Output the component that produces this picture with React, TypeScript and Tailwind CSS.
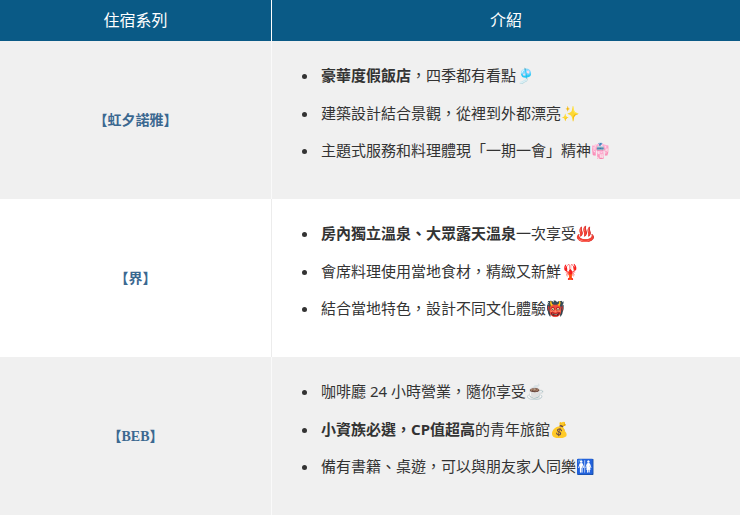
import React from "react";

type Row = { name: string; bg: string; line: string; items: React.ReactNode[] };

const rows: Row[] = [
  {
    name: "【虹夕諾雅】",
    bg: "bg-[#f0f0f0]",
    line: "border-[#fafafa]",
    items: [
      <><b className="font-bold">豪華度假飯店</b>，四季都有看點🎐</>,
      <>建築設計結合景觀，從裡到外都漂亮✨</>,
      <>主題式服務和料理體現「一期一會」精神👘</>,
    ],
  },
  {
    name: "【界】",
    bg: "bg-white",
    line: "border-[#ececec]",
    items: [
      <><b className="font-bold">房內獨立溫泉、大眾露天溫泉</b>一次享受♨️</>,
      <>會席料理使用當地食材，精緻又新鮮🦞</>,
      <>結合當地特色，設計不同文化體驗👹</>,
    ],
  },
  {
    name: "【BEB】",
    bg: "bg-[#f0f0f0]",
    line: "border-[#fafafa]",
    items: [
      <>咖啡廳 24 小時營業，隨你享受☕</>,
      <><b className="font-bold">小資族必選，CP值超高</b>的青年旅館💰</>,
      <>備有書籍、桌遊，可以與朋友家人同樂🚻</>,
    ],
  },
];

const serif = "font-[Liberation_Serif,Noto_Sans_CJK_TC,serif]";
const sans = "font-['Noto_Sans','Noto_Sans_CJK_TC','Noto_Color_Emoji',sans-serif]";

export default function App() {
  return (
    <div className="w-[740px] h-[515px] overflow-hidden bg-white">
      <div className="flex h-[41px] bg-[#0a5a86] text-white">
        <div className={`w-[272px] flex items-center justify-center text-[16px] border-r border-white ${serif}`}>
          住宿系列
        </div>
        <div className={`flex-1 flex items-center justify-center text-[16px] ${serif}`}>
          介紹
        </div>
      </div>
      {rows.map((r, i) => (
        <div key={i} className={`flex h-[158px] ${r.bg}`}>
          <div
            className={`w-[272px] flex items-center justify-center border-r ${r.line} text-[14px] font-bold text-[#3b6890] ${serif}`}
          >
            {r.name}
          </div>
          <div className="flex-1">
            <ul className={`list-disc pl-[47px] pt-[23px] flex flex-col gap-[15.5px] text-[15px] leading-[22px] text-[#333] ${sans}`}>
              {r.items.map((it, j) => (
                <li key={j} className="pl-[2px]">{it}</li>
              ))}
            </ul>
          </div>
        </div>
      ))}
    </div>
  );
}
